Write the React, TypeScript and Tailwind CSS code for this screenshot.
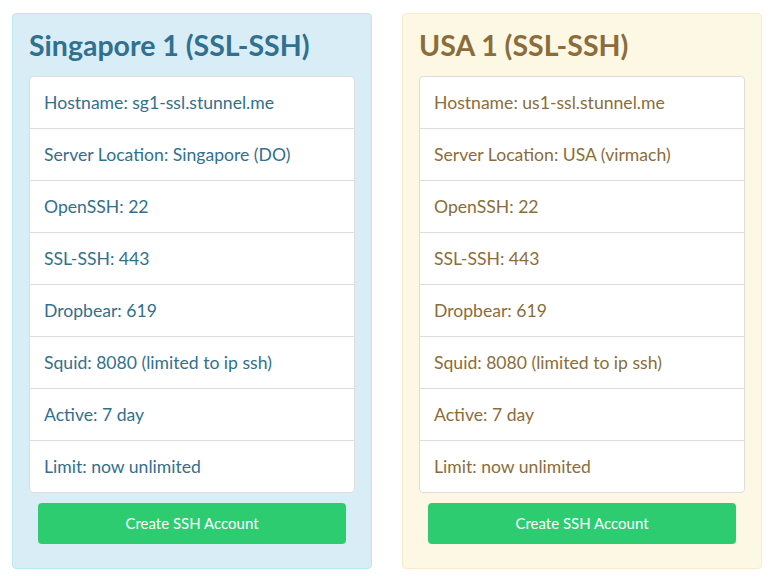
import React from "react";

type Server = {
  title: string;
  hostname: string;
  location: string;
  tone: "info" | "warning";
};

const servers: Server[] = [
  {
    title: "Singapore 1 (SSL-SSH)",
    hostname: "sg1-ssl.stunnel.me",
    location: "Singapore (DO)",
    tone: "info",
  },
  {
    title: "USA 1 (SSL-SSH)",
    hostname: "us1-ssl.stunnel.me",
    location: "USA (virmach)",
    tone: "warning",
  },
];

function ServerCard({ server }: { server: Server }) {
  const info = server.tone === "info";
  const rows = [
    `Hostname: ${server.hostname}`,
    `Server Location: ${server.location}`,
    "OpenSSH: 22",
    "SSL-SSH: 443",
    "Dropbear: 619",
    "Squid: 8080 (limited to ip ssh)",
    "Active: 7 day",
    "Limit: now unlimited",
  ];

  return (
    <div
      className={
        info
          ? "w-[360px] rounded-[4px] border border-[#bce8f1] bg-[#d9edf7] px-[16px] pb-[24px] pt-[15px] text-[#31708f]"
          : "w-[360px] rounded-[4px] border border-[#faebcc] bg-[#fcf8e3] px-[16px] pb-[24px] pt-[15px] text-[#8a6d3b]"
      }
    >
      <h2 className="text-[28.5px] font-bold leading-[33px]">{server.title}</h2>
      <ul className="mt-[14px] overflow-hidden rounded-[4px] border border-[#ddd] bg-white">
        {rows.map((r, i) => (
          <li
            key={r}
            className={
              i === 0
                ? "h-[51px] px-[14px] pt-[15px] text-[17.6px] leading-[22px]"
                : "h-[52px] border-t border-[#ddd] px-[14px] pt-[15px] text-[17.6px] leading-[22px]"
            }
          >
            {r}
          </li>
        ))}
      </ul>
      <div className="mt-[10px] px-[9px]">
        <button className="h-[41px] w-full rounded-[4px] bg-[#2ecc71] text-[15px] text-white">
          Create SSH Account
        </button>
      </div>
    </div>
  );
}

export default function App() {
  return (
    <div className="flex h-[580px] w-[775px] items-start gap-[30px] bg-white pl-[12px] pt-[13px] font-['Lato',sans-serif]">
      {servers.map((s) => (
        <ServerCard key={s.title} server={s} />
      ))}
    </div>
  );
}
